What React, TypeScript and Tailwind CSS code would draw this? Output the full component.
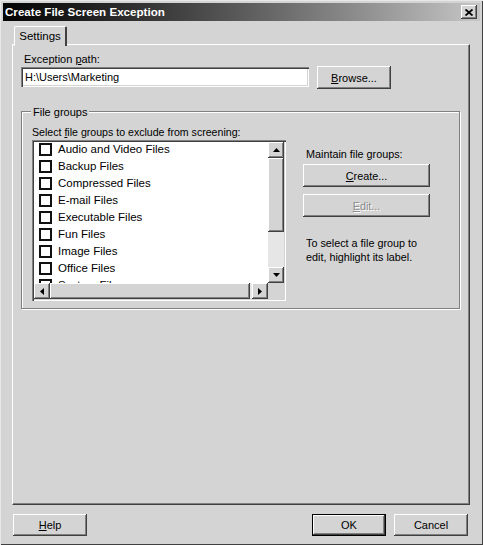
import React from "react";

const raised =
  "bg-[#d4d4d4] shadow-[inset_-1px_-1px_0_#404040,inset_1px_1px_0_#ffffff,inset_-2px_-2px_0_#808080]";
const sunken =
  "shadow-[inset_1px_1px_0_#808080,inset_2px_2px_0_#404040,inset_-1px_-1px_0_#ffffff,inset_-2px_-2px_0_#d4d4d4]";

const groups = [
  "Audio and Video Files",
  "Backup Files",
  "Compressed Files",
  "E-mail Files",
  "Executable Files",
  "Fun Files",
  "Image Files",
  "Office Files",
  "System Files",
];

function Arrow({ dir }: { dir: "up" | "down" | "left" | "right" }) {
  const pts = {
    up: "0,4 3.5,0 7,4",
    down: "0,0 7,0 3.5,4",
    left: "4,0 4,7 0,3.5",
    right: "0,0 0,7 4,3.5",
  }[dir];
  const vert = dir === "up" || dir === "down";
  return (
    <svg width={vert ? 7 : 4} height={vert ? 4 : 7} viewBox={vert ? "0 0 7 4" : "0 0 4 7"}>
      <polygon points={pts} fill="#000" />
    </svg>
  );
}

function Btn({
  children,
  className = "",
  def = false,
  disabled = false,
}: {
  children: React.ReactNode;
  className?: string;
  def?: boolean;
  disabled?: boolean;
}) {
  return (
    <div
      className={`${raised} flex items-center justify-center ${def ? "border border-black" : ""} ${
        disabled ? "text-[#8a8a8a] [text-shadow:1px_1px_0_#ffffff]" : "text-black"
      } ${className}`}
    >
      {children}
    </div>
  );
}

export default function App() {
  return (
    <div
      className="w-[483px] h-[545px] bg-[#d4d4d4] p-[3px] flex flex-col shadow-[inset_1px_1px_0_#e8e8e8,inset_-1px_-1px_0_#404040] text-[11px] leading-[14px] text-black"
      style={{ fontFamily: '"Liberation Sans", Arial, sans-serif' }}
    >
      {/* title bar */}
      <div className="h-[18px] flex items-center justify-between bg-linear-to-r from-[#050505] to-[#c6c6c6] pl-[2px] pr-[3px]">
        <span className="text-white font-bold text-[11.6px] leading-[18px]">Create File Screen Exception</span>
        <div className={`${raised} w-[16px] h-[14px] flex items-center justify-center`}>
          <svg width="8" height="7" viewBox="0 0 8 7">
            <path d="M0.5 0.5 L7.5 6.5 M7.5 0.5 L0.5 6.5" stroke="#000" strokeWidth="1.8" />
          </svg>
        </div>
      </div>

      <div className="flex-1 flex flex-col pl-[9px] pr-[10px] pt-[5px]">
        {/* tab row */}
        <div className="flex pl-[2px] h-[18px]">
          <div className="relative z-10 h-[20px] w-[53px] bg-[#d4d4d4] border-l border-t border-white border-r-2 border-r-[#404040] rounded-t-[2px] flex items-start justify-center pt-[2px] text-[11.5px]">
            Settings
          </div>
        </div>

        {/* tab panel */}
        <div className="h-[461px] flex flex-col border-l border-t border-white border-r border-b border-r-[#404040] border-b-[#404040] shadow-[inset_-1px_-1px_0_#808080] px-[8px] pt-[7px]">
          <div className="pl-[3px] mb-[1px]">
            Exception <span className="underline">p</span>ath:
          </div>
          <div className="flex gap-[8px] items-start">
            <div className={`${sunken} bg-white w-[288px] h-[20px] flex items-center px-[4px]`}>
              H:\Users\Marketing
            </div>
            <Btn className="w-[74px] h-[23px] -mt-[1px]">
              <span>
                <span className="underline">B</span>rowse...
              </span>
            </Btn>
          </div>

          {/* group box */}
          <div className="relative mt-[22px] w-[439px] h-[198px] border border-[#808080] shadow-[inset_1px_1px_0_#ffffff,1px_1px_0_#ffffff] pt-[13px] pl-[10px] pr-[10px]">
            <span className="absolute -top-[7px] left-[9px] px-[2px] bg-[#d4d4d4]">File groups</span>
            <div className="flex gap-[17px]">
              <div className="flex flex-col">
                <div className="h-[14px] text-[10.6px]">
                  Select <span className="underline">f</span>ile groups to exclude from screening:
                </div>
                {/* list box */}
                <div className={`${sunken} bg-white mt-[1px] w-[254px] h-[161px] p-[2px] flex flex-col`}>
                  <div className="flex flex-1 min-h-0">
                    <div className="flex-1 overflow-hidden">
                      <div className="-mt-px">
                        {groups.map((g) => (
                          <div key={g} className="h-[17px] flex items-center pl-[5px] gap-[6px]">
                            <div className="w-[13px] h-[13px] border-2 border-[#111] bg-white shrink-0" />
                            <span className="text-[11.5px] leading-[17px]">{g}</span>
                          </div>
                        ))}
                      </div>
                    </div>
                    {/* vertical scrollbar */}
                    <div className="w-[16px] flex flex-col bg-[#e6e6e6]">
                      <div className={`${raised} h-[16px] flex items-center justify-center`}>
                        <Arrow dir="up" />
                      </div>
                      <div className={`${raised} h-[74px]`} />
                      <div className="flex-1" />
                      <div className={`${raised} h-[16px] flex items-center justify-center`}>
                        <Arrow dir="down" />
                      </div>
                    </div>
                  </div>
                  {/* horizontal scrollbar */}
                  <div className="h-[16px] flex">
                    <div className="flex-1 flex bg-[#e6e6e6]">
                      <div className={`${raised} w-[16px] flex items-center justify-center`}>
                        <Arrow dir="left" />
                      </div>
                      <div className={`${raised} w-[200px]`} />
                      <div className="flex-1" />
                      <div className={`${raised} w-[16px] flex items-center justify-center`}>
                        <Arrow dir="right" />
                      </div>
                    </div>
                    <div className="w-[16px] bg-[#d4d4d4]" />
                  </div>
                </div>
              </div>

              {/* right column */}
              <div className="w-[127px] pt-[22px] flex flex-col text-[10.8px]">
                <div className="pl-[3px] mb-[3px]">Maintain file groups:</div>
                <Btn className="h-[23px]">
                  <span>
                    <span className="underline">C</span>reate...
                  </span>
                </Btn>
                <Btn className="h-[23px] mt-[7px]" disabled>
                  <span>
                    <span className="underline">E</span>dit...
                  </span>
                </Btn>
                <div className="pl-[3px] mt-[19px]">
                  To select a file group to
                  <br />
                  edit, highlight its label.
                </div>
              </div>
            </div>
          </div>
        </div>

        {/* bottom buttons */}
        <div className="flex items-center pt-[9px] pl-[1px] pr-[2px]">
          <Btn className="w-[74px] h-[22px]">
            <span>
              <span className="underline">H</span>elp
            </span>
          </Btn>
          <div className="flex-1" />
          <Btn className="w-[74px] h-[22px]" def>
            OK
          </Btn>
          <Btn className="w-[74px] h-[22px] ml-[8px]">Cancel</Btn>
        </div>
      </div>
    </div>
  );
}
